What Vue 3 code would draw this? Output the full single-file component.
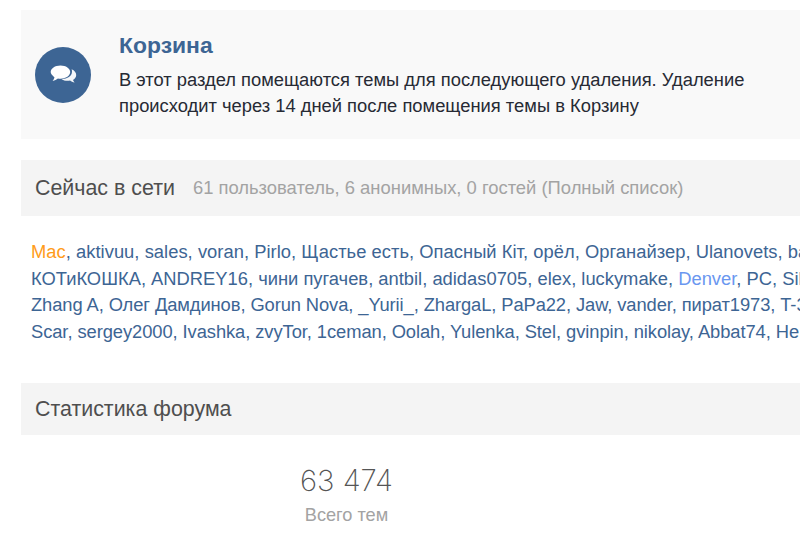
<template>
  <div class="page">
    <section class="intro">
      <div class="intro-icon">
        <svg width="28" height="22" viewBox="0 0 28 22">
          <path class="back" d="M22.6 5.2c2.9 1.2 4.6 3.3 4.6 5.7 0 2-1.2 3.8-3.2 5 .3.9.8 1.7 1.6 2.6-1.800-.2-3.300-.9-4.500-2-.8.2-1.700.3-2.600.3-2.400 0-4.500-.7-6-1.900 5.400.2 10.500-2.700 10.500-7.200 0-.9-.1-1.700-.4-2.500z" />
          <path d="M11.500 1.500c5.500 0 9.700 2.900 9.700 6.600s-4.200 6.600-9.700 6.600c-.9 0-1.800-.1-2.600-.2-1.400 1.200-3.200 2.100-5.300 2.400.9-1 1.600-2.100 1.900-3.400C3 11.300 1.700 9.800 1.700 8.100c0-3.700 4.300-6.600 9.800-6.600z" />
        </svg>
      </div>
      <div class="intro-text">
        <h2>Корзина</h2>
        <p>В этот раздел помещаются темы для последующего удаления. Удаление<br>происходит через 14 дней после помещения темы в Корзину</p>
      </div>
    </section>

    <header class="bar online-bar">
      <h3>Сейчас в сети</h3>
      <span class="counts">61 пользователь, 6 анонимных, 0 гостей (Полный список)</span>
    </header>

    <div class="users">
      <div v-for="(line, i) in lines" :key="i" class="users-line">
        <template v-for="(user, j) in line" :key="j">
          <a :class="user.cls">{{ user.name }}</a><span v-if="j < line.length - 1">, </span>
        </template>
      </div>
    </div>

    <header class="bar stats-bar">
      <h3>Статистика форума</h3>
    </header>

    <div class="stats">
      <div class="stat">
        <div class="stat-num">63 474</div>
        <div class="stat-label">Всего тем</div>
      </div>
    </div>
  </div>
</template>

<script setup>
const toLine = (names) => names.map((name) => {
  if (name === 'Mac') return { name, cls: 'admin' }
  if (name === 'Denver') return { name, cls: 'mod' }
  return { name, cls: '' }
})

const lines = [
  ['Mac', 'aktivuu', 'sales', 'voran', 'Pirlo', 'Щастье есть', 'Опасный Кіт', 'орёл', 'Органайзер', 'Ulanovets', 'ba'],
  ['КОТиКОШКА', 'ANDREY16', 'чини пугачев', 'antbil', 'adidas0705', 'elex', 'luckymake', 'Denver', 'PC', 'Sil'],
  ['Zhang A', 'Олег Дамдинов', 'Gorun Nova', '_Yurii_', 'ZhargaL', 'PaPa22', 'Jaw', 'vander', 'пират1973', 'T-3'],
  ['Scar', 'sergey2000', 'Ivashka', 'zvyTor', '1ceman', 'Oolah', 'Yulenka', 'Stel', 'gvinpin', 'nikolay', 'Abbat74', 'He']
].map(toLine)
</script>

<style>
html, body { margin: 0; background: #fff; overflow: hidden; }
</style>

<style scoped>
.page {
  width: 800px;
  height: 550px;
  overflow: hidden;
  padding: 10px 0 0 21px;
  box-sizing: border-box;
  font-family: "Liberation Sans", Arial, sans-serif;
}

.intro {
  width: 800px;
  height: 129px;
  background: #f9f9f9;
  display: flex;
  align-items: center;
  padding-left: 14px;
  box-sizing: border-box;
}
.intro-icon {
  width: 56px;
  height: 56px;
  border-radius: 50%;
  background: #3d6594;
  display: flex;
  align-items: center;
  justify-content: center;
  flex-shrink: 0;
}
.intro-icon svg { fill: #fff; }
.intro-icon .back { opacity: .95; }
.intro-text { margin-left: 28px; margin-top: 1px; }
.intro-text h2 {
  margin: 0 0 9px;
  font-size: 22.9px;
  line-height: 26px;
  font-weight: 700;
  color: #3d6594;
}
.intro-text p {
  margin: 0;
  font-size: 18.35px;
  line-height: 26px;
  color: #272a34;
  white-space: nowrap;
}

.bar {
  width: 800px;
  background: #f4f4f4;
  display: flex;
  align-items: center;
  padding-left: 14px;
  box-sizing: border-box;
}
.bar h3 {
  margin: 0;
  font-size: 21.4px;
  font-weight: 400;
  color: #4e4e4e;
  white-space: nowrap;
}
.online-bar { height: 56px; margin-top: 21px; }
.stats-bar { height: 52px; }
.counts {
  margin-left: 18px;
  font-size: 18.4px;
  color: #a3a3a3;
  white-space: nowrap;
}

.users {
  padding: 23px 0 27px 10px;
  height: 167px;
  box-sizing: border-box;
  width: 800px;
}
.users-line {
  font-size: 18.35px;
  line-height: 26.6px;
  color: #3d6594;
  white-space: nowrap;
}
.users-line:nth-child(1) { letter-spacing: .03px; }
.users-line:nth-child(3) { letter-spacing: -.1px; }
.users-line:nth-child(4) { letter-spacing: -.08px; }
.admin { color: #ff9c1a; }
.mod { color: #6a97f0; }

.stats { display: flex; padding-top: 28px; }
.stat { width: 651px; text-align: center; }
.stat-num {
  font-family: Inter, "Liberation Sans", sans-serif;
  font-weight: 200;
  font-size: 29.3px;
  line-height: 36px;
  color: #555;
}
.stat-label {
  margin-top: 6px;
  font-size: 18.2px;
  line-height: 20px;
  color: #a3a3a3;
}
</style>
